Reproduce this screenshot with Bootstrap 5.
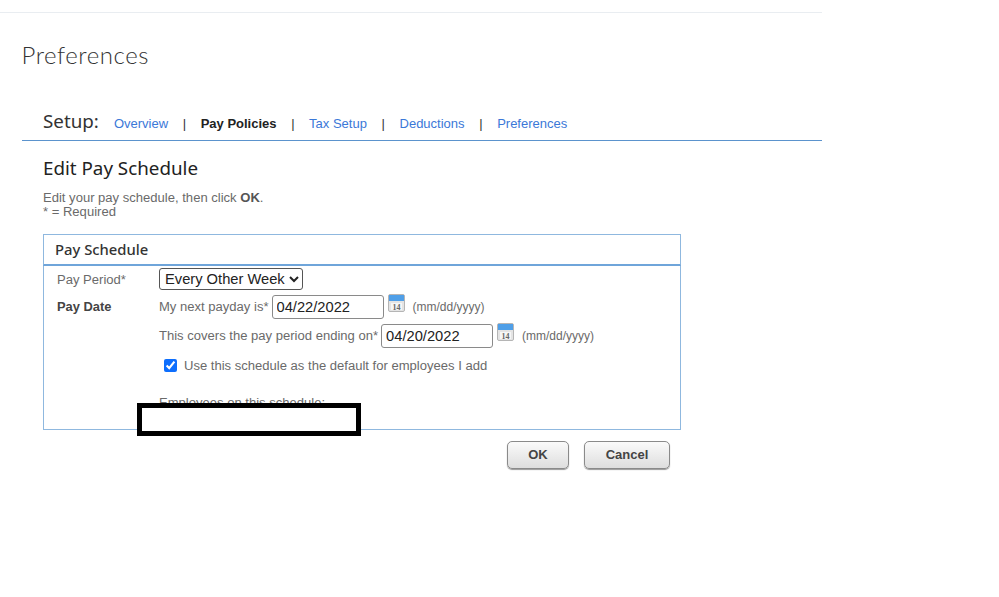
<!DOCTYPE html>
<html lang="en">
<head>
<meta charset="utf-8">
<title>Preferences</title>
<link rel="stylesheet" href="https://cdn.jsdelivr.net/npm/bootstrap@5.3.0/dist/css/bootstrap.min.css">
<style>
html,body{overflow:hidden;}
body{background:#fff;font-family:"Liberation Sans",Arial,sans-serif;font-size:13.05px;color:#6a6a6a;height:597px;}
.shell{width:822px;}
.topline{height:13px;border-bottom:1px solid #e9edf1;}
.page-name{font-family:Lato,sans-serif;font-weight:300;font-size:24px;line-height:30px;color:#333;margin:27px 0 0 21.5px;letter-spacing:.55px;}
.tabbar{margin:36px 0 0 22px;height:35px;padding:2px 0 0 21px;border-bottom:1px solid #5b93cd;line-height:20px;}
.setup-word{font-family:"Noto Sans",sans-serif;font-size:18.8px;color:#333;margin:-6px 15px 0 0;line-height:26px;}
.tab-link{color:#3b78d8;text-decoration:none;font-size:13px;}
.tab-on{color:#222;font-weight:700;font-size:13px;}
.tab-sep{color:#333;font-size:13px;margin:0 14.6px;}
.main-area{padding-left:43px;}
.edit-title{font-family:"Noto Sans",sans-serif;font-size:18.8px;font-weight:400;line-height:26px;color:#222;margin:14px 0 0;}
.edit-note{margin:10px 0 0;line-height:14px;color:#6a6a6a;}
.edit-note b{color:#555;}
.panel-wrap{width:638px;margin-top:15px;position:relative;}
.panel-head{height:32px;border:1px solid #8fb8df;border-bottom:2px solid #6fa5da;font-family:"Noto Sans",sans-serif;font-weight:500;font-size:14.8px;color:#333;padding:3px 0 0 11px;line-height:22px;}
.panel-body{height:164px;border:1px solid #8fb8df;border-top:0;overflow:hidden;position:relative;}
.field-row{display:flex;}
.row-payday{margin-top:5px;}
.row-cover{margin-top:5px;}
.row-check{margin-top:8px;}
.field-label{width:115px;padding-left:13px;flex:none;}
.label-period{padding-top:3px;}
.label-date{padding-top:2px;}
.field-label b{font-size:12.9px;color:#444;}
.pick{font-family:"Liberation Sans",Arial,sans-serif;font-size:14.7px;color:#222;height:22px;width:144px;border:1px solid #555;border-radius:3px;background:#fff;padding:0 0 0 1px;margin-top:2px;}
.date-in{font-family:"Liberation Sans",Arial,sans-serif;font-size:14.7px;color:#222;width:112px;height:24px;border:1px solid #8a8a8a;border-radius:3px;padding:0 4px;margin-left:3px;}
.cal{margin:-1px 4px 0 4px;align-self:flex-start;flex:none;}
.fmt{font-size:12px;margin-left:4px;}
.defcheck{width:13px;height:13px;margin:0 7px 0 5px;accent-color:#0d6efd;}
.emp-line{margin:19px 0 0 115px;line-height:16px;}
.mask-box{position:absolute;left:94px;top:169px;width:224px;height:33px;border:5px solid #000;background:#fff;}
.act-btn{font-weight:700;font-size:13px;color:#444;height:28px;border:1px solid #8a8a8a;border-radius:5px;background:linear-gradient(#fafafa,#dedede);box-shadow:0 1px 1px #999;padding:0;}
.ok-btn{width:62px;}
.no-btn{width:86px;}
.btn-line{width:627px;margin-top:11px;gap:15px;}
</style>
</head>
<body>
<div class="shell">
  <div class="topline"></div>
  <div class="page-name">Preferences</div>
  <nav class="tabbar d-flex align-items-center">
    <span class="setup-word">Setup:</span>
    <a class="tab-link" href="#">Overview</a><span class="tab-sep">|</span>
    <a class="tab-link tab-on" href="#">Pay Policies</a><span class="tab-sep">|</span>
    <a class="tab-link" href="#">Tax Setup</a><span class="tab-sep">|</span>
    <a class="tab-link" href="#">Deductions</a><span class="tab-sep">|</span>
    <a class="tab-link" href="#">Preferences</a>
  </nav>
  <div class="main-area">
    <h1 class="edit-title">Edit Pay Schedule</h1>
    <p class="edit-note">Edit your pay schedule, then click <b>OK</b>.<br>* = Required</p>
    <div class="panel-wrap">
      <div class="panel-head">Pay Schedule</div>
      <div class="panel-body">
        <div class="field-row align-items-center">
          <div class="field-label label-period">Pay Period*</div>
          <select class="pick"><option>Every Other Week</option></select>
        </div>
        <div class="field-row row-payday">
          <div class="field-label label-date"><b>Pay Date</b></div>
          <div>
            <div class="d-flex align-items-center">
              <span>My next payday is*</span><input class="date-in" value="04/22/2022">
              <svg class="cal" width="17" height="18" viewBox="0 0 17 18"><rect x=".5" y=".5" width="16" height="17" rx="1.5" fill="#e4e4e4" stroke="#b5b5b5"/><rect x="1" y="1" width="15" height="6" fill="#4f9fe8"/><rect x="3" y="9" width="11" height="7" fill="#f6f6f6"/><text x="8.5" y="15.5" font-size="8" font-weight="700" text-anchor="middle" fill="#666" font-family="Liberation Serif">14</text></svg>
              <span class="fmt">(mm/dd/yyyy)</span>
            </div>
            <div class="d-flex align-items-center row-cover">
              <span>This covers the pay period ending on*</span><input class="date-in" value="04/20/2022">
              <svg class="cal" width="17" height="18" viewBox="0 0 17 18"><rect x=".5" y=".5" width="16" height="17" rx="1.5" fill="#e4e4e4" stroke="#b5b5b5"/><rect x="1" y="1" width="15" height="6" fill="#4f9fe8"/><rect x="3" y="9" width="11" height="7" fill="#f6f6f6"/><text x="8.5" y="15.5" font-size="8" font-weight="700" text-anchor="middle" fill="#666" font-family="Liberation Serif">14</text></svg>
              <span class="fmt">(mm/dd/yyyy)</span>
            </div>
            <div class="d-flex align-items-center row-check">
              <input class="defcheck" type="checkbox" checked>
              <span>Use this schedule as the default for employees I add</span>
            </div>
          </div>
        </div>
        <div class="emp-line">Employees on this schedule:</div>
      </div>
      <div class="mask-box"></div>
      <div class="btn-line d-flex justify-content-end">
        <button class="act-btn ok-btn" type="button">OK</button>
        <button class="act-btn no-btn" type="button">Cancel</button>
      </div>
    </div>
  </div>
</div>
<script src="https://cdn.jsdelivr.net/npm/bootstrap@5.3.0/dist/js/bootstrap.bundle.min.js"></script>
</body>
</html>
